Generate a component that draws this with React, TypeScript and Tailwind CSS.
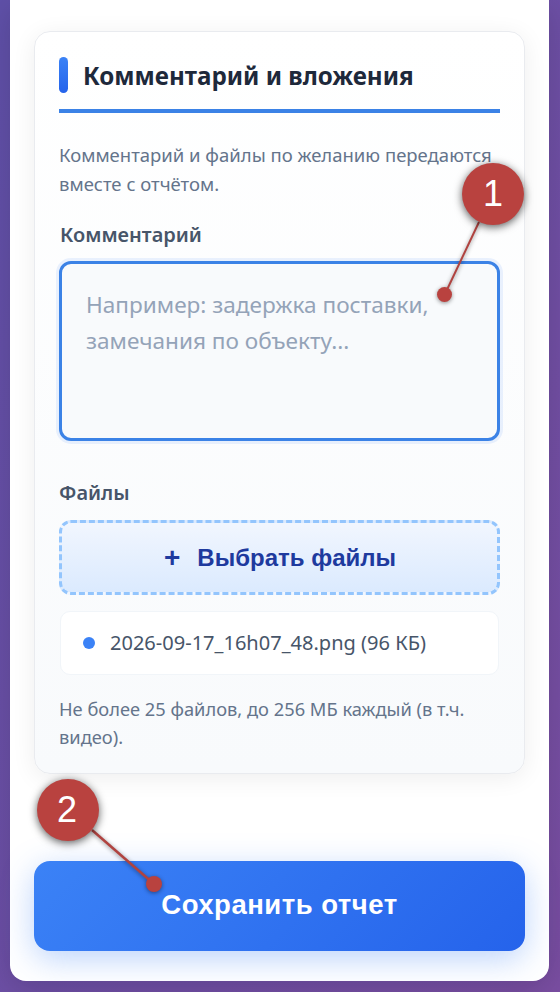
export default function App() {
  return (
    <div className="relative h-[992px] w-[560px] overflow-hidden bg-gradient-to-br from-[#5f50a8] to-[#7a4ea2] px-[10px] font-['Noto_Sans',sans-serif]">
      <div className="flex h-[981px] w-[539px] flex-col rounded-b-[16px] bg-white px-[24px] pt-[31px] shadow-[0_8px_32px_rgba(0,0,0,0.15)]">
        <div className="flex h-[743px] flex-col rounded-[16px] border border-[#e9ebef] bg-gradient-to-b from-white to-[#f8fafc] px-[24px] pt-[25px] shadow-[0_4px_24px_rgba(0,0,0,0.07)]">
          <div className="flex h-[36px] items-center gap-[15px]">
            <div className="h-[36px] w-[9px] rounded-[5px] bg-gradient-to-b from-[#3b82f6] to-[#2563eb]" />
            <h2 className="pt-[2px] text-[24.2px] leading-[36px] font-bold text-[#1e293b]">Комментарий и вложения</h2>
          </div>
          <div className="mt-[16px] h-[4px] w-full bg-[#3b82e6]" />
          <p className="mt-[27px] text-[18.5px] leading-[29px] text-[#64748b]">Комментарий и файлы по желанию передаются вместе с отчётом.</p>
          <div className="mt-[23px] pl-[1px] text-[20px] leading-[28px] font-semibold text-[#475569]">Комментарий</div>
          <div className="mt-[12px] h-[180px] rounded-[12px] border-[3px] border-[#3b82e6] bg-[#f8fafc] px-[24px] pt-[23px] text-[22.6px] leading-[36px] text-[#94a3b8] shadow-[0_0_0_3px_rgba(59,130,246,0.1)]">
            Например: задержка поставки, замечания по объекту...
          </div>
          <div className="mt-[38px] text-[20px] leading-[28px] font-semibold text-[#475569]">Файлы</div>
          <div className="mt-[13px] flex h-[75px] items-center justify-center gap-[17px] rounded-[12px] border-[3px] border-dashed border-[#93c5fd] bg-gradient-to-b from-[#f1f6fe] to-[#dbeafe] pl-[1px] font-['Liberation_Sans',sans-serif] text-[24px] font-bold text-[#1e3a9e]">
            <span className="text-[28px] leading-[28px]">+</span>
            <span>Выбрать файлы</span>
          </div>
          <div className="mx-[1px] mt-[16px] flex h-[64px] items-center gap-[15px] rounded-[10px] border border-[#f1f5f9] bg-white px-[22px] text-[20.05px] text-[#475569]">
            <span className="h-[12px] w-[12px] rounded-full bg-[#3b82f6]" />
            <span>2026-09-17_16h07_48.png (96 КБ)</span>
          </div>
          <p className="mt-[20px] text-[18.3px] leading-[28px] text-[#64748b]">Не более 25 файлов, до 256 МБ каждый (в т.ч. видео).</p>
        </div>
        <button className="mt-[87px] h-[90px] w-full rounded-[16px] bg-[linear-gradient(135deg,#3b82f6,#2563eb)] pb-[2px] font-['Liberation_Sans',sans-serif] text-[27.5px] font-bold tracking-[0.5px] text-white shadow-[0_8px_32px_rgba(59,130,246,0.35)]">Сохранить отчет</button>
      </div>

      <svg className="absolute top-0 left-0 drop-shadow-[0_1px_2px_rgba(0,0,0,0.45)]" width="560" height="992" viewBox="0 0 560 992" fill="none">
        <line x1="479" y1="222" x2="445" y2="294" stroke="#b04340" strokeWidth="2" />
        <circle cx="444.5" cy="294.5" r="7.5" fill="#b9423f" />
        <line x1="92" y1="830" x2="154" y2="884" stroke="#b04340" strokeWidth="2.5" />
        <circle cx="154" cy="884" r="8" fill="#b9423f" />
      </svg>
      <div className="absolute top-[163px] left-[462px] flex h-[62px] w-[62px] items-center justify-center rounded-full bg-[#b9423f] font-['Liberation_Sans',sans-serif] text-[36px] text-white shadow-[0_2px_8px_rgba(0,0,0,0.65)]">1</div>
      <div className="absolute top-[779px] left-[37px] flex h-[62px] w-[62px] items-center justify-center rounded-full bg-[#b9423f] pr-[2px] font-['Liberation_Sans',sans-serif] text-[36px] text-white shadow-[0_2px_8px_rgba(0,0,0,0.65)]">2</div>
    </div>
  );
}
